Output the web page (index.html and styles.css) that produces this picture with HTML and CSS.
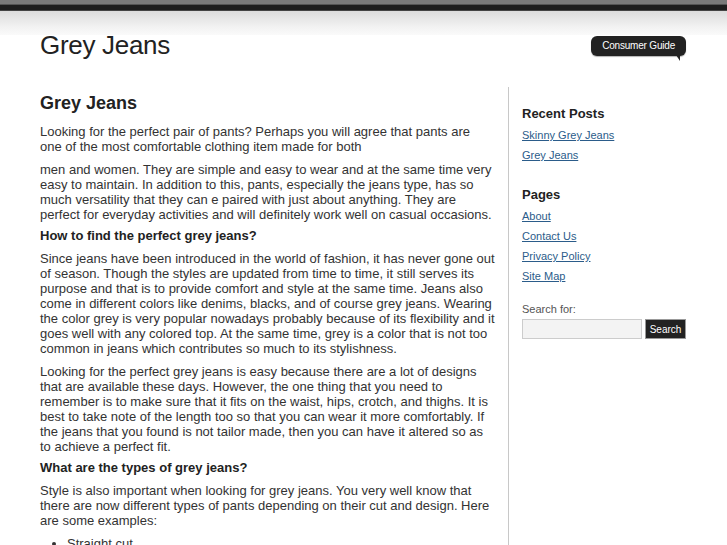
FILE: index.html
```html
<!DOCTYPE html>
<html>
<head>
<meta charset="utf-8">
<link rel="stylesheet" href="styles.css">
</head>
<body>
<div class="topbar"></div>
<div class="fade"></div>
<div class="wrap">
  <header class="header">
    <h1 class="site-title">Grey Jeans</h1>
    <div class="badge">Consumer Guide<span class="tail"></span></div>
  </header>
  <div class="main">
    <div class="content">
      <h2 class="post-title">Grey Jeans</h2>
      <p>Looking for the perfect pair of pants? Perhaps you will agree that pants are one of the most comfortable clothing item made for both</p>
      <p>men and women. They are simple and easy to wear and at the same time very easy to maintain. In addition to this, pants, especially the jeans type, has so much versatility that they can e paired with just about anything. They are perfect for everyday activities and will definitely work well on casual occasions.</p>
      <h3 class="sub">How to find the perfect grey jeans?</h3>
      <p>Since jeans have been introduced in the world of fashion, it has never gone out of season. Though the styles are updated from time to time, it still serves its purpose and that is to provide comfort and style at the same time. Jeans also come in different colors like denims, blacks, and of course grey jeans. Wearing the color grey is very popular nowadays probably because of its flexibility and it goes well with any colored top. At the same time, grey is a color that is not too common in jeans which contributes so much to its stylishness.</p>
      <p>Looking for the perfect grey jeans is easy because there are a lot of designs that are available these days. However, the one thing that you need to remember is to make sure that it fits on the waist, hips, crotch, and thighs. It is best to take note of the length too so that you can wear it more comfortably. If the jeans that you found is not tailor made, then you can have it altered so as to achieve a perfect fit.</p>
      <h3 class="sub">What are the types of grey jeans?</h3>
      <p>Style is also important when looking for grey jeans. You very well know that there are now different types of pants depending on their cut and design. Here are some examples:</p>
      <ul class="list">
        <li>Straight cut</li>
        <li>Boot cut</li>
      </ul>
    </div>
    <aside class="sidebar">
      <h4 class="widget-title">Recent Posts</h4>
      <ul class="links">
        <li><a href="#">Skinny Grey Jeans</a></li>
        <li><a href="#">Grey Jeans</a></li>
      </ul>
      <h4 class="widget-title">Pages</h4>
      <ul class="links links-last">
        <li><a href="#">About</a></li>
        <li><a href="#">Contact Us</a></li>
        <li><a href="#">Privacy Policy</a></li>
        <li><a href="#">Site Map</a></li>
      </ul>
      <div class="search-label">Search for:</div>
      <form class="search">
        <input class="search-input" type="text">
        <button class="search-btn" type="button">Search</button>
      </form>
    </aside>
  </div>
</div>
</body>
</html>
```
FILE: styles.css
```css
html, body {
  margin: 0;
  padding: 0;
  background: #fff;
}
body {
  font-family: "Liberation Sans", Arial, sans-serif;
  color: #333;
  font-size: 13px;
  line-height: 15px;
}
.topbar {
  height: 11px;
  background: linear-gradient(#7a7a7a 0, #7a7a7a 4px, #555 4px, #555 5px, #1e1e1e 5px, #1e1e1e 10px, #444 10px, #444 11px);
}
.fade {
  height: 24px;
  background: linear-gradient(#dcdcdc, #f3f3f3 70%, #fafafa);
}
.wrap {
  margin: -24px 41px 0 40px;
}
.header {
  height: 76px;
  display: flex;
  justify-content: space-between;
  align-items: flex-start;
}
.site-title {
  margin: 18px 0 0;
  font-size: 26px;
  font-weight: normal;
  line-height: 32px;
  color: #222;
  letter-spacing: -0.3px;
}
.badge {
  position: relative;
  margin-top: 25px;
  height: 20px;
  line-height: 20px;
  padding: 0 11px;
  background: #222;
  color: #fff;
  font-size: 10px;
  border-radius: 6px;
  letter-spacing: -0.2px;
  box-shadow: 0 1px 1px rgba(0,0,0,0.3);
}
.tail {
  position: absolute;
  right: 6px;
  bottom: -5px;
  width: 0;
  height: 0;
  border-top: 6px solid #222;
  border-left: 4px solid transparent;
}
.main {
  display: flex;
  align-items: flex-start;
}
.content {
  width: 455px;
  padding-right: 13px;
  border-right: 1px solid #c8c8c8;
  padding-top: 5px;
}
.post-title {
  margin: 0 0 10px;
  font-size: 18px;
  line-height: 22px;
  font-weight: bold;
  color: #222;
}
.content p {
  margin: 0 0 8px;
}
.sub {
  margin: -2px 0 8px;
  font-size: 13px;
  line-height: 15px;
  font-weight: bold;
  color: #222;
}
.list {
  margin: 8px 0 0;
  padding-left: 27px;
}
.sidebar {
  padding-left: 13px;
  width: 164px;
  padding-top: 19px;
  padding-bottom: 20px;
}
.widget-title {
  margin: 0 0 4px;
  font-size: 13px;
  line-height: 15px;
  font-weight: bold;
  color: #222;
}
.links {
  list-style: none;
  margin: 0 0 22px;
  padding: 0;
}
.links-last {
  margin-bottom: 16px;
}
.links li {
  font-size: 11px;
  line-height: 20px;
}
.links a {
  color: #2b5c8a;
  text-decoration: underline;
}
.search-label {
  margin: 0;
  font-size: 11px;
  line-height: 14px;
  color: #555;
}
.search {
  display: flex;
  gap: 3px;
  margin-top: 3px;
}
.search-input {
  width: 120px;
  height: 20px;
  box-sizing: border-box;
  border: 1px solid #ccc;
  background: #f3f3f3;
  padding: 0;
  margin: 0;
}
.search-btn {
  width: 41px;
  height: 20px;
  box-sizing: border-box;
  border: 1px solid #999;
  background: #222;
  color: #fff;
  font-family: "Liberation Sans", Arial, sans-serif;
  font-size: 10px;
  padding: 0;
  margin: 0;
}
```
